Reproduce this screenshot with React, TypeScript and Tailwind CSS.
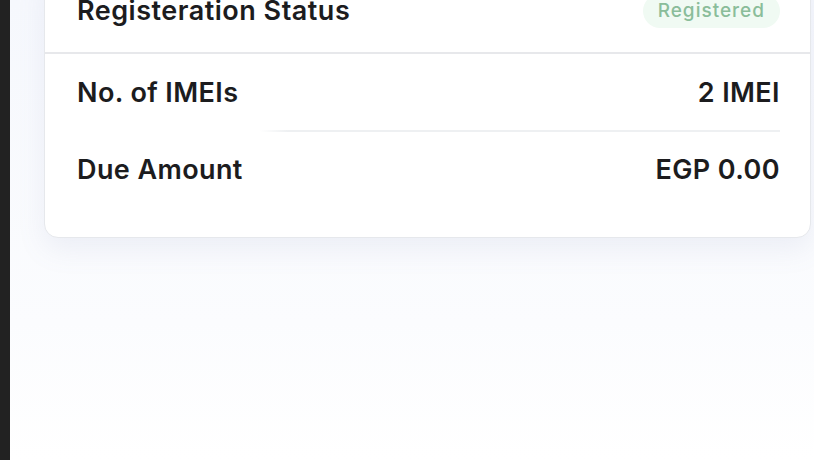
import React from 'react'

const rows = [
  { label: 'No. of IMEIs', value: '2 IMEI' },
  { label: 'Due Amount', value: 'EGP 0.00' },
]

const App = () => {
  return (
    <div className='flex h-[460px] w-[814px] overflow-hidden bg-white' style={{ fontFamily: 'Inter, "Noto Sans", sans-serif' }}>
      <div className='w-[10px] shrink-0 bg-[#222222]' />
      <div className='flex-1 bg-gradient-to-b from-[#f6f8fd] via-[#fbfcfe] via-[70%] to-white pl-[34px] pr-[3px]'>
        <div className='-mt-[31px] rounded-[14px] border border-[#e6e8ec] bg-white pb-[29px] shadow-[0_12px_28px_rgba(120,130,180,0.10)]'>
          <div className='flex h-[82px] items-center justify-between pl-[32px] pr-[30px]'>
            <span className='text-[27px] font-semibold tracking-[0.5px] text-[#1c1c1e]'>Registeration Status</span>
            <span className='rounded-full bg-[#f0faf3] px-[15px] py-[3px] text-[19px] font-medium tracking-[1px] text-[#8abd9a]'>Registered</span>
          </div>
          <div className='h-[2px] bg-[#e7e8eb]' />
          <div className='flex h-[76px] items-center justify-between pl-[32px] pr-[30px] pt-[2px]'>
            <span className='text-[27px] font-semibold tracking-[0.4px] text-[#1c1c1e]'>{rows[0].label}</span>
            <span className='text-[27px] font-semibold tracking-[0.4px] text-[#1c1c1e]'>{rows[0].value}</span>
          </div>
          <div className='ml-[32px] mr-[30px] h-[2px] bg-gradient-to-r from-white from-[26%] to-[#eef0f2] to-[30%]' />
          <div className='flex h-[76px] items-center justify-between pl-[32px] pr-[30px]'>
            <span className='text-[27px] font-semibold tracking-[0.4px] text-[#1c1c1e]'>{rows[1].label}</span>
            <span className='text-[27px] font-semibold tracking-[0.4px] text-[#1c1c1e]'>{rows[1].value}</span>
          </div>
        </div>
      </div>
    </div>
  )
}

export default App
